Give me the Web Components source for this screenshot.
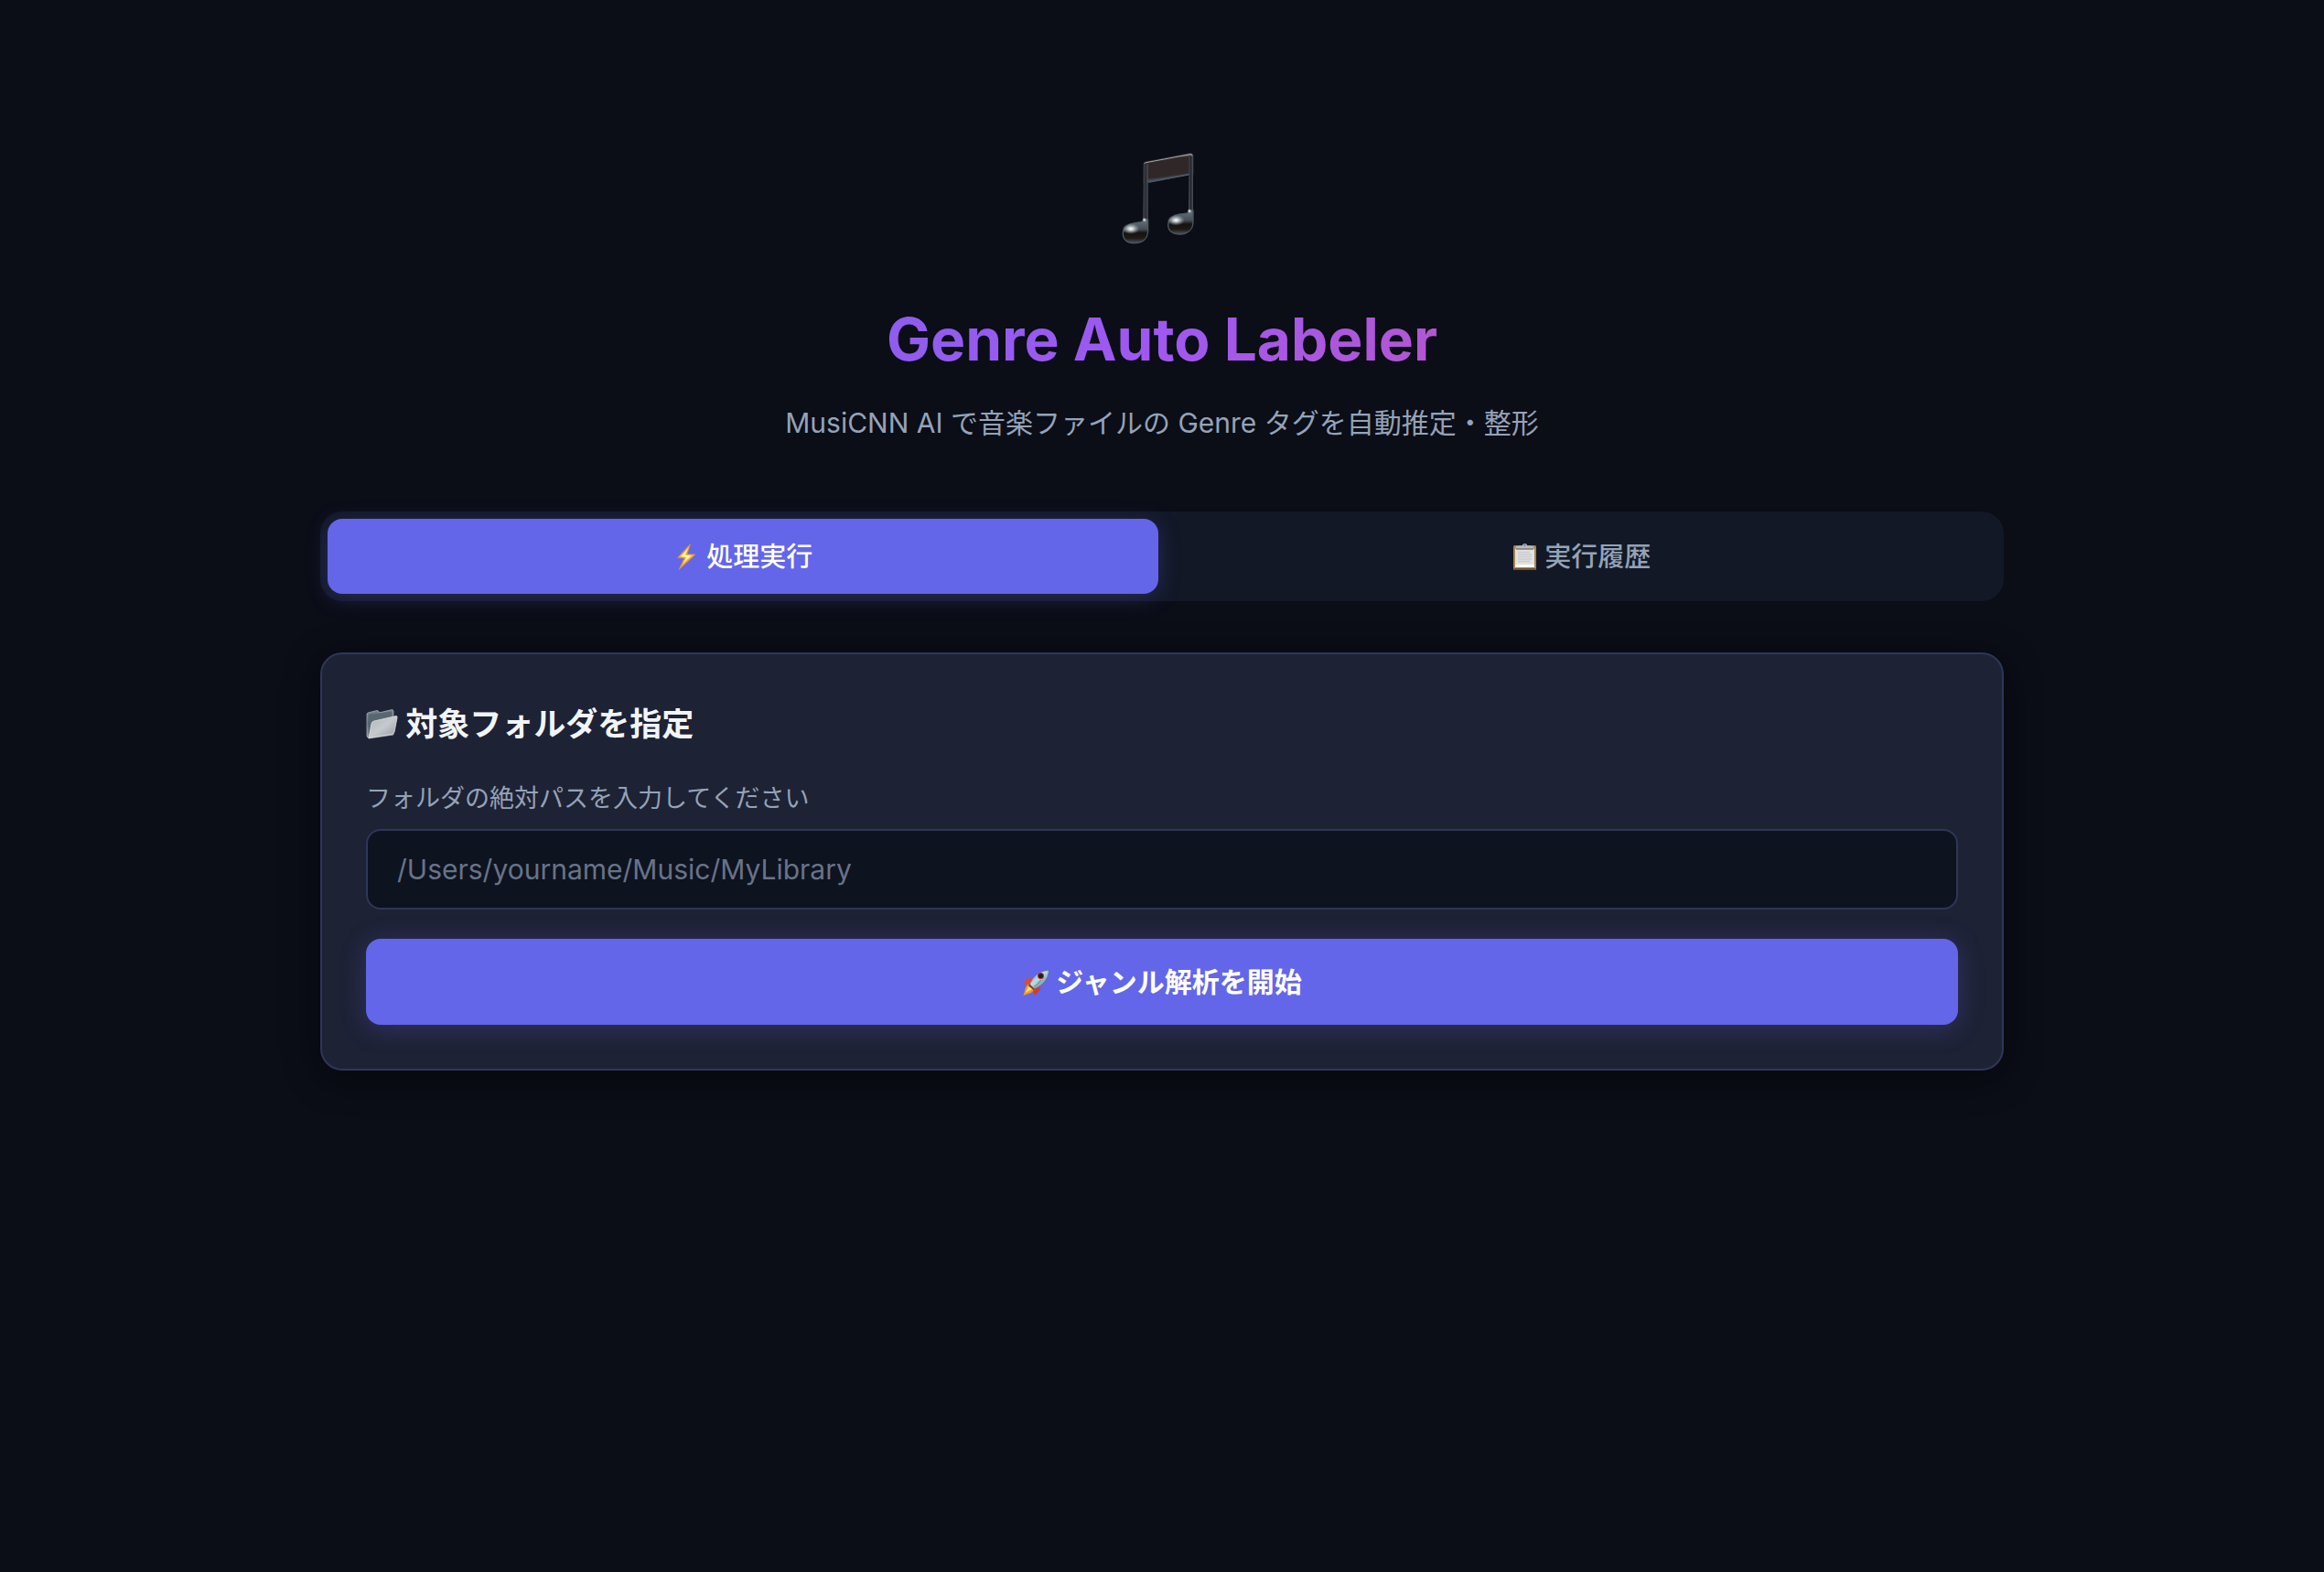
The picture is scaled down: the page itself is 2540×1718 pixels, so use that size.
<!DOCTYPE html>
<html lang="ja">
<head>
<meta charset="utf-8">
<meta name="viewport" content="width=device-width, initial-scale=1">
<title>Genre Auto Labeler</title>
<style>
:root{
    --bg:#0b0d17;
    --card:#1e2235;
    --tabs:#121826;
    --field:#0d131f;
    --line:#2e3758;
    --accent:#6366e8;
    --text:#f1f5f9;
    --muted:#94a3b8;
    --faint:#687389;
}
body{
    margin:0;
    min-height:100vh;
    background:var(--bg);
    color:var(--text);
    font-family:Inter, "Noto Sans CJK JP", sans-serif;
}
main{
    box-sizing:border-box;
    max-width:2000px;
    margin:0 auto;
    padding:140px 80px 80px;
}
tab-bar{
    margin:73px 0 56px;
}
</style>
</head>
<body>
<main>
    <page-header>
        Genre Auto Labeler
        <span slot="lead">MusiCNN AI で音楽ファイルの Genre タグを自動推定・整形</span>
    </page-header>
    <tab-bar>
        <tab-item active icon="bolt">処理実行</tab-item>
        <tab-item icon="clipboard">実行履歴</tab-item>
    </tab-bar>
    <form-card icon="folder">
        <span slot="title">対象フォルダを指定</span>
        <path-field label="フォルダの絶対パスを入力してください" placeholder="/Users/yourname/Music/MyLibrary"></path-field>
        <start-button icon="rocket">ジャンル解析を開始</start-button>
    </form-card>
</main>

<script>
const icons={
    note:`
    <svg viewBox="0 0 420 450">
        <defs>
            <linearGradient id="beam" x1="0" y1="0" x2="0" y2="1">
                <stop offset="0" stop-color="#6c7075"/>
                <stop offset=".14" stop-color="#302829"/>
                <stop offset=".62" stop-color="#2c2425"/>
                <stop offset="1" stop-color="#465260"/>
            </linearGradient>
            <linearGradient id="stem">
                <stop offset="0" stop-color="#4d5258"/>
                <stop offset=".5" stop-color="#24262b"/>
                <stop offset="1" stop-color="#4b5560"/>
            </linearGradient>
            <linearGradient id="head" x1="0" y1="0" x2="0" y2="1">
                <stop offset="0" stop-color="#6a747d"/>
                <stop offset=".42" stop-color="#464f58"/>
                <stop offset=".58" stop-color="#15120f"/>
                <stop offset=".8" stop-color="#201a17"/>
                <stop offset="1" stop-color="#4a545e"/>
            </linearGradient>
            <radialGradient id="shine">
                <stop offset="0" stop-color="#fff"/>
                <stop offset=".3" stop-color="#d3dadd" stop-opacity=".9"/>
                <stop offset="1" stop-color="#8e9aa3" stop-opacity="0"/>
            </radialGradient>
        </defs>
        <path d="M150 116 Q150 112 156 111 L302 83 Q312 82 312 91 V151 L300 152 L164 178 L150 180Z" fill="url(#beam)" stroke="#3d444c" stroke-width="2"/>
        <path d="M156 119V168Q230 160 300 141V94Z" fill="#302728"/>
        <path d="M152 118Q152 114 158 113L302 86Q309 85 309 91" fill="none" stroke="#a5a9ac" stroke-width="3"/>
        <path d="M166 177L298 152" stroke="#4e5b68" stroke-width="5"/>
        <path d="M150 118H164V345H157L148 298Z" fill="url(#stem)"/>
        <path d="M299 92H312V320H305L297 268Z" fill="url(#stem)"/>
        <path d="M155 298C151 309 139 308 119 311C96 315 82 328 82 345C82 367 97 378 122 377C148 376 164 361 164 335V300Z" fill="url(#head)" stroke="#4c5761" stroke-width="4"/>
        <path d="M303 269C299 280 288 279 268 282C244 286 230 300 230 317C230 338 246 349 270 348C296 347 312 332 312 306V270Z" fill="url(#head)" stroke="#4c5761" stroke-width="4"/>
        <ellipse cx="108" cy="330" rx="29" ry="18" fill="url(#shine)"/>
        <ellipse cx="256" cy="302" rx="29" ry="18" fill="url(#shine)"/>
        <circle cx="152" cy="301" r="8" fill="url(#shine)"/>
        <circle cx="300" cy="272" r="8" fill="url(#shine)"/>
    </svg>`,
    bolt:`
    <svg viewBox="0 0 29 29">
        <path d="M18.5 0.5L4.5 15.5L12 16L6 28.5L24 12L15 11.5Z" fill="#f5aa31" stroke="#d28a4c" stroke-width=".8"/>
        <path d="M17 4L7.5 14.5L14 15L10 22.5L20.5 13L13 12.6Z" fill="#ffe67a"/>
        <path d="M15 7L9 13.8L15 14.3L12.5 18.5L18.5 13.4L12 13Z" fill="#fffbd8"/>
    </svg>`,
    clipboard:`
    <svg viewBox="0 0 29 29">
        <rect x="2" y="2" width="25" height="27" rx="1.5" fill="#ad8448"/>
        <rect x="2.5" y="27" width="24" height="2" fill="#755331"/>
        <path d="M4 6H25V26H4Z" fill="#e1e2e3"/>
        <path d="M4 23H25V26H4Z" fill="#fafafa"/>
        <path d="M7 9.5H20M7 12H22M7 14.5H22M7 17H22M7 19.5H20" stroke="#c9cbcd" stroke-width="1.7"/>
        <path d="M4.500 6V4Q5 2.500 8 2.500H11.500Q12 0 14.500 0T17.500 2.500H21Q24 2.500 24.500 4V6Z" fill="#b7babf"/>
        <path d="M5 6H24" stroke="#777b80" stroke-width="1.5"/>
        <circle cx="14.500" cy="1.800" r=".9" fill="#596273"/>
    </svg>`,
    folder:`
    <svg viewBox="0 0 35 35">
        <defs>
            <linearGradient id="back" x1="0" y1="0" x2="0" y2="1">
                <stop offset="0" stop-color="#77828c"/>
                <stop offset=".5" stop-color="#56636d"/>
                <stop offset="1" stop-color="#8f989e"/>
            </linearGradient>
            <linearGradient id="front" x1="0" y1="0" x2="1" y2="1">
                <stop offset="0" stop-color="#aeb4b9"/>
                <stop offset=".5" stop-color="#c6cace"/>
                <stop offset="1" stop-color="#94999f"/>
            </linearGradient>
        </defs>
        <path d="M1 6L2 5L12 2.500L14 3.500V5L29 1.500L30 3V29L3 33L1 31Z" fill="url(#back)" stroke="#b3babf" stroke-width=".7"/>
        <path d="M3 7L28 3.500V10L7 15L3 32Z" fill="#586771"/>
        <path d="M3 32.500L6 17Q6.500 14.500 9 14L33 8.500Q34.500 8.500 34 10.500L31 26Q30.500 28 28 28.500Z" fill="url(#front)" stroke="#dfe2e4" stroke-width=".8"/>
    </svg>`,
    rocket:`
    <svg viewBox="0 0 30 30">
        <defs>
            <linearGradient id="body" x1="0" y1="0" x2="1" y2="1">
                <stop offset="0" stop-color="#4f7a98"/>
                <stop offset=".45" stop-color="#c3dae2"/>
                <stop offset="1" stop-color="#2d5777"/>
            </linearGradient>
        </defs>
        <path d="M12 10L6 10.500L1 16L9 18Z" fill="#e5482b"/>
        <path d="M20 17L19.500 23L14 29L11 21Z" fill="#d63b24"/>
        <path d="M7 16L4 20L1.500 29L10 26L14 22Z" fill="#f49a23"/>
        <path d="M7 19L4 26L11 22Z" fill="#ffe578"/>
        <path d="M29.500 1.500Q22 1 16 6Q11 10 8 17L13 22Q21 19 25 14Q29 9 29.500 1.500Z" fill="url(#body)" stroke="#365d7b" stroke-width=".5"/>
        <path d="M8 16L14 22L12.500 23L7 18Z" fill="#7d3b37"/>
        <path d="M13 20Q17 17 21 12" fill="none" stroke="#6f9db2" stroke-width="1.500"/>
        <circle cx="20.500" cy="7.500" r="3.500" fill="#b02a25"/>
        <circle cx="20.500" cy="7.500" r="2.500" fill="#17212b"/>
    </svg>`
}

class AppIcon extends HTMLElement{
    constructor(){
        super()
        this.attachShadow({mode:"open"})
    }
    connectedCallback(){
        this.shadowRoot.innerHTML=`
        <style>
        :host{
            display:inline-block;
            width:1em;
            height:1em;
            vertical-align:-0.15em;
        }
        svg{
            display:block;
            width:100%;
            height:100%;
        }
        </style>
        ${icons[this.getAttribute("name")]}
        `
    }
}

class PageHeader extends HTMLElement{
    constructor(){
        super()
        this.attachShadow({mode:"open"})
    }
    connectedCallback(){
        this.shadowRoot.innerHTML=`
        <style>
        :host{
            display:block;
            text-align:center;
        }
        app-icon{
            display:block;
            width:140px;
            height:150px;
            margin:0 auto 43px;
        }
        h1{
            margin:0 0 29px;
            font-size:64px;
            line-height:76px;
            font-weight:700;
            background:linear-gradient(135deg, #6e66e8, #9f58f0, #dd5492);
            -webkit-background-clip:text;
            background-clip:text;
            color:transparent;
        }
        p{
            margin:0;
            color:var(--muted);
            font-size:30px;
            line-height:48px;
        }
        </style>
        <app-icon name="note"></app-icon>
        <h1><slot></slot></h1>
        <p><slot name="lead"></slot></p>
        `
    }
}

class TabBar extends HTMLElement{
    constructor(){
        super()
        this.attachShadow({mode:"open"})
    }
    connectedCallback(){
        this.shadowRoot.innerHTML=`
        <style>
        :host{
            display:flex;
            gap:8px;
            padding:8px;
            border-radius:24px;
            background:var(--tabs);
        }
        </style>
        <slot></slot>
        `
        this.addEventListener("click",(e)=>{
            let tab=e.target.closest("tab-item")
            if (!tab) return
            this.querySelectorAll("tab-item").forEach((t)=>{t.toggleAttribute("active",t===tab)})
        })
    }
}

class TabItem extends HTMLElement{
    constructor(){
        super()
        this.attachShadow({mode:"open"})
    }
    connectedCallback(){
        this.shadowRoot.innerHTML=`
        <style>
        :host{
            display:block;
            flex:1;
        }
        button{
            width:100%;
            padding:21px 32px 19px;
            border:0;
            border-radius:16px;
            background:transparent;
            color:var(--muted);
            font-family:inherit;
            font-size:29px;
            line-height:42px;
            font-weight:500;
            cursor:pointer;
        }
        :host([active]) button{
            background:var(--accent);
            color:#fff;
            box-shadow:0 4px 24px rgba(99,102,241,.25);
        }
        </style>
        <button type="button"><app-icon name="${this.getAttribute("icon")}"></app-icon> <slot></slot></button>
        `
    }
}

class FormCard extends HTMLElement{
    constructor(){
        super()
        this.attachShadow({mode:"open"})
    }
    connectedCallback(){
        this.shadowRoot.innerHTML=`
        <style>
        :host{
            display:block;
            padding:48px;
            border:2px solid var(--line);
            border-radius:24px;
            background:var(--card);
            box-shadow:0 8px 40px rgba(0,0,0,.4);
        }
        h2{
            margin:0 0 32px;
            font-size:35px;
            line-height:56px;
            font-weight:700;
        }
        form{
            display:flex;
            flex-direction:column;
            gap:32px;
        }
        </style>
        <h2><app-icon name="${this.getAttribute("icon")}"></app-icon> <slot name="title"></slot></h2>
        <form><slot></slot></form>
        `
    }
}

class PathField extends HTMLElement{
    constructor(){
        super()
        this.attachShadow({mode:"open"})
    }
    connectedCallback(){
        this.shadowRoot.innerHTML=`
        <style>
        :host{
            display:block;
        }
        label{
            display:block;
            margin-bottom:12px;
            color:var(--muted);
            font-size:27px;
            line-height:43px;
        }
        input{
            box-sizing:border-box;
            display:block;
            width:100%;
            height:88px;
            padding:0 32px;
            border:2px solid var(--line);
            border-radius:16px;
            outline:0;
            background:var(--field);
            color:var(--text);
            font-family:inherit;
            font-size:30px;
        }
        input::placeholder{
            color:var(--faint);
            opacity:1;
        }
        input:focus{
            border-color:var(--accent);
        }
        </style>
        <label for="path">${this.getAttribute("label")}</label>
        <input id="path" type="text" placeholder="${this.getAttribute("placeholder")}">
        `
    }
}

class StartButton extends HTMLElement{
    constructor(){
        super()
        this.attachShadow({mode:"open"})
    }
    connectedCallback(){
        this.shadowRoot.innerHTML=`
        <style>
        :host{
            display:block;
        }
        button{
            display:block;
            width:100%;
            padding:25px 32px;
            border:0;
            border-radius:16px;
            background:var(--accent);
            color:#fff;
            font-family:inherit;
            font-size:30px;
            line-height:44px;
            font-weight:700;
            box-shadow:0 4px 28px rgba(99,102,241,.25);
            cursor:pointer;
        }
        </style>
        <button type="button"><app-icon name="${this.getAttribute("icon")}"></app-icon> <slot></slot></button>
        `
    }
}

window.customElements.define("app-icon",AppIcon)
window.customElements.define("page-header",PageHeader)
window.customElements.define("tab-bar",TabBar)
window.customElements.define("tab-item",TabItem)
window.customElements.define("form-card",FormCard)
window.customElements.define("path-field",PathField)
window.customElements.define("start-button",StartButton)
</script>
</body>
</html>
